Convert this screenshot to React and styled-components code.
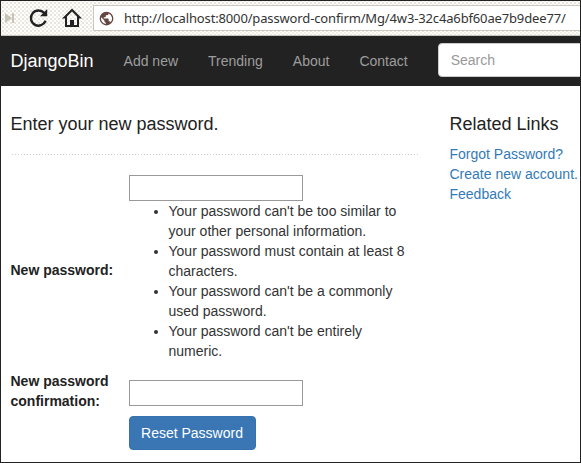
import React from "react";
import styled, { createGlobalStyle } from "styled-components";

const Global = createGlobalStyle`
  *, *::before, *::after { box-sizing: border-box; }
  html, body { margin: 0; background: #fff; overflow: hidden; }
  body { font: 14px/20px "Liberation Sans", Arial, sans-serif; color: #333; }
`;

const Window = styled.div`
  width: 581px;
  height: 463px;
  border: 1px solid #222;
  overflow: hidden;
  display: flex;
  flex-direction: column;
`;

const Toolbar = styled.div`
  flex: none;
  height: 35px;
  display: flex;
  align-items: center;
  padding-left: 4px;
  border-bottom: 1px solid #c9c5bc;
  background-color: #fefefd;
  background-image:
    radial-gradient(circle, #dcd6cd 0.6px, transparent 0.9px),
    radial-gradient(circle, #e8e3dc 0.6px, transparent 0.9px);
  background-size: 4px 4px;
  background-position: 0 0, 2px 2px;
`;

const ToolIcon = styled.svg`
  flex: none;
  display: block;
  margin-left: ${(p) => p.$gap || 0}px;
`;

const AddressBar = styled.div`
  flex: none;
  display: flex;
  align-items: center;
  width: 500px;
  height: 26px;
  margin: 0 0 0 11px;
  padding-left: 5px;
  border: 1px solid #cdc8bd;
  background: #fff;
`;

const Url = styled.span`
  margin-left: 10px;
  font: 13px/18px "Noto Sans", "Open Sans", sans-serif;
  letter-spacing: -0.145px;
  color: #333;
  white-space: nowrap;
`;

const Navbar = styled.nav`
  flex: none;
  height: 50px;
  display: flex;
  align-items: center;
  padding-left: 9.5px;
  background: #222;
  white-space: nowrap;
`;

const Brand = styled.a`
  margin-right: 15px;
  font-size: 18px;
  color: #fff;
`;

const NavLink = styled.a`
  padding: 0 15px;
  color: #9d9d9d;
`;

const Search = styled.input`
  flex: none;
  width: 200px;
  height: 34px;
  margin-left: 15px;
  margin-bottom: 2px;
  padding: 6px 12px;
  border: 1px solid #ccc;
  border-radius: 4px;
  background: #fff;
  font: inherit;
  &::placeholder { color: #999; opacity: 1; }
`;

const Page = styled.main`
  display: flex;
  gap: 30px;
  padding: 28px 0 0 9.5px;
`;

const Main = styled.section`
  flex: none;
  width: 409px;
`;

const Heading = styled.h4`
  margin: 0 0 10px;
  font-size: 18px;
  line-height: 20px;
  font-weight: 400;
  color: #222;
  white-space: nowrap;
`;

const Rule = styled.div`
  height: 1px;
  margin: 20px 0;
  background: repeating-linear-gradient(90deg, transparent 0 1px, #d3d0c8 1px 2px, transparent 2px 3px);
`;

const Form = styled.form`
  display: grid;
  grid-template-columns: 118px 285px;
  align-items: center;
`;

const Label = styled.label`
  padding-bottom: ${(p) => p.$lift || 0}px;
  font-weight: 700;
  color: #222;
`;

const Field = styled.input`
  display: block;
  width: 174px;
  height: 26px;
  margin-top: ${(p) => p.$drop || 0}px;
  border: 1px solid #999;
  background: #fff;
`;

const Hints = styled.ul`
  margin: 0 0 10px;
  padding-left: 40px;
`;

const Submit = styled.button`
  grid-column: 2;
  justify-self: start;
  width: 127px;
  height: 34px;
  margin-top: 5px;
  padding: 6px 11px;
  border: 1px solid #3672ae;
  border-radius: 4px;
  background: #3a76b4;
  font: inherit;
  color: #fff;
  white-space: nowrap;
`;

const Links = styled.div`
  display: flex;
  flex-direction: column;
  white-space: nowrap;
`;

const SideLink = styled.a`
  color: #337ab7;
`;

export default function App() {
  return (
    <>
      <Global />
      <Window>
        <Toolbar>
          <ToolIcon width="10" height="12" viewBox="0 0 10 12" fill="#c8c3b9">
            <path d="M0 1l7 5-7 5zM7 1h2v10H7z" />
          </ToolIcon>
          <ToolIcon $gap={14} width="20" height="20" viewBox="0 0 20 20">
            <path d="M16.6 12.8A7.6 7.6 0 1 1 15.2 5" fill="none" stroke="#222" strokeWidth="2.4" />
            <path d="M18.2 1v7.2H11z" fill="#222" />
          </ToolIcon>
          <ToolIcon $gap={13} width="20" height="20" viewBox="0 0 20 20" fill="#222">
            <path
              fillRule="evenodd"
              d="M10 .5L20 10.500h-3V19H3v-8.500H0zM10 3.500L5 8.500V17h3v-5h4v5h3V8.500z"
            />
          </ToolIcon>
          <AddressBar>
            <ToolIcon width="15" height="15" viewBox="0 0 24 24" fill="#64453f">
              <path d="M12 1a11 11 0 1 0 0 22 11 11 0 0 0 0-22zm-1 19.8A8.9 8.9 0 0 1 3.4 10l5.3 5.3v1.1c0 1.2 1 2.200 2.300 2.200zm7.700-2.800a2.200 2.200 0 0 0-2.100-1.500h-1.100v-3.300c0-.6-.5-1.100-1.100-1.100H7.600V9.900h2.200c.6 0 1.100-.5 1.100-1.100V6.600h2.200c1.200 0 2.200-1 2.200-2.200V4a8.900 8.900 0 0 1 3.400 14z" />
            </ToolIcon>
            <Url>http://localhost:8000/password-confirm/Mg/4w3-32c4a6bf60ae7b9dee77/</Url>
          </AddressBar>
        </Toolbar>
        <Navbar>
          <Brand>DjangoBin</Brand>
          <NavLink>Add new</NavLink>
          <NavLink>Trending</NavLink>
          <NavLink>About</NavLink>
          <NavLink>Contact</NavLink>
          <Search placeholder="Search" />
        </Navbar>
        <Page>
          <Main>
            <Heading>Enter your new password.</Heading>
            <Rule />
            <Form>
              <Label htmlFor="password" $lift={6}>New password:</Label>
              <div>
                <Field id="password" type="password" />
                <Hints>
                  <li>Your password can't be too similar to your other personal information.</li>
                  <li>Your password must contain at least 8 characters.</li>
                  <li>Your password can't be a commonly used password.</li>
                  <li>Your password can't be entirely numeric.</li>
                </Hints>
              </div>
              <Label htmlFor="confirmation">New password confirmation:</Label>
              <Field id="confirmation" type="password" $drop={4} />
              <Submit type="button">Reset Password</Submit>
            </Form>
          </Main>
          <aside>
            <Heading>Related Links</Heading>
            <Links>
              <SideLink>Forgot Password?</SideLink>
              <SideLink>Create new account.</SideLink>
              <SideLink>Feedback</SideLink>
            </Links>
          </aside>
        </Page>
      </Window>
    </>
  );
}
